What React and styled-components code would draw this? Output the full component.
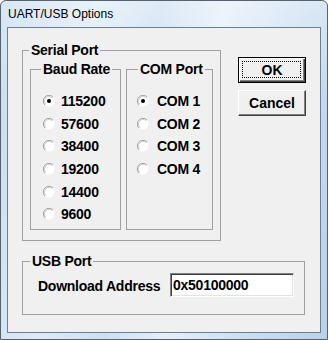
import styled, { createGlobalStyle } from "styled-components";

const GlobalStyle = createGlobalStyle`
  html, body {
    margin: 0;
    padding: 0;
    background: #ffffff;
  }
`;

const Window = styled.div`
  width: 328px;
  height: 340px;
  box-sizing: border-box;
  display: flex;
  flex-direction: column;
  padding: 0 6px 6px 6px;
  border: 1px solid #55626f;
  border-radius: 6px 6px 0 0;
  background:
    linear-gradient(180deg, rgba(255,255,255,0.35) 0%, rgba(255,255,255,0) 30%),
    linear-gradient(100deg, #c6dcf0 0%, #deebf7 25%, #cde0f2 42%, #e4eff9 58%, #cadef1 80%, #b8d1ea 100%);
`;

const TitleBar = styled.div`
  height: 26px;
  flex: none;
  display: flex;
  align-items: center;
  padding-left: 1px;
  font-family: "Liberation Sans", Arial, sans-serif;
  font-size: 12px;
  color: #000;
`;

const Client = styled.div`
  flex: 1;
  border: 1px solid #6a7f93;
  background: #f0f0f0;
  padding: 15px 0 0 14px;
  font-family: "Liberation Sans", Arial, sans-serif;
  font-size: 14px;
  font-weight: bold;
  letter-spacing: -0.25px;
  color: #000;
`;

const TopRow = styled.div`
  display: flex;
  align-items: flex-start;
`;

const Group = styled.fieldset`
  box-sizing: border-box;
  margin: ${(p) => p.$mt || 0}px 0 0 0;
  width: ${(p) => p.$w}px;
  height: ${(p) => p.$h}px;
  border: 1px solid #a0a0a0;
  padding: 0;
  min-inline-size: 0;
`;

const Caption = styled.legend`
  margin-left: ${(p) => p.$offset}px;
  padding: 0 2px;
  line-height: 14px;
  height: 14px;
  white-space: nowrap;
`;

const GroupBody = styled.div`
  padding: ${(p) => p.$pad};
`;

const GroupRow = styled.div`
  display: flex;
  gap: 5px;
`;

const OptionRow = styled.label`
  display: flex;
  align-items: center;
  height: 22.6px;
  gap: ${(p) => p.$gap}px;
`;

const ButtonColumn = styled.div`
  display: flex;
  flex-direction: column;
  gap: 7px;
  margin: 14px 0 0 17px;
`;

const DialogButton = styled.button`
  position: relative;
  width: 68px;
  height: 26px;
  box-sizing: border-box;
  background: #f0f0f0;
  font-family: "Liberation Sans", Arial, sans-serif;
  font-size: 14px;
  font-weight: bold;
  color: #000;
  padding: 0;
  border: 1px solid;
  border-color: ${(p) => (p.$primary ? "#000" : "#fff #404040 #404040 #fff")};
  box-shadow: ${(p) =>
    p.$primary
      ? "inset 1px 1px #fff, inset -1px -1px #404040, inset -2px -2px #808080"
      : "inset -1px -1px #808080"};

  &::after {
    content: "";
    display: ${(p) => (p.$primary ? "block" : "none")};
    position: absolute;
    inset: 3px 4px 4px 3px;
    border: 1px dotted #000;
  }
`;

const UsbRow = styled.div`
  display: flex;
  align-items: center;
`;

const FieldLabel = styled.span`
  width: 132px;
  padding-top: 2px;
`;

const AddressInput = styled.input`
  box-sizing: border-box;
  width: 124px;
  height: 24px;
  margin: 0;
  padding: 0 0 0 2px;
  border: 1px solid;
  border-color: #808080 #fff #fff #808080;
  box-shadow: inset 1px 1px #404040, inset -1px -1px #e3e3e3;
  background: #fff;
  font-family: "Liberation Sans", Arial, sans-serif;
  font-size: 14px;
  font-weight: bold;
  letter-spacing: -0.25px;
  color: #000;
  outline: none;
`;

function Radio({ checked }) {
  return (
    <svg width="12" height="12" viewBox="0 0 12 12" style={{ flex: "none" }}>
      <circle cx="6" cy="6" r="5.5" fill="#fff" />
      <path d="M10 2 A5.5 5.5 0 0 0 2 10" fill="none" stroke="#a0a0a0" strokeWidth="1" />
      <path d="M9.2 2.8 A4.5 4.5 0 0 0 2.8 9.2" fill="none" stroke="#d0d0d0" strokeWidth="1" />
      {checked && <circle cx="6" cy="6" r="2" fill="#000" />}
    </svg>
  );
}

const baudRates = ["115200", "57600", "38400", "19200", "14400", "9600"];
const comPorts = ["COM 1", "COM 2", "COM 3", "COM 4"];

export default function App() {
  return (
    <>
      <GlobalStyle />
      <Window>
        <TitleBar>UART/USB Options</TitleBar>
        <Client>
          <TopRow>
            <Group $w={199} $h={198}>
              <Caption $offset={6}>Serial Port</Caption>
              <GroupBody $pad="5px 7px 0 7px">
                <GroupRow>
                  <Group $w={91} $h={168}>
                    <Caption $offset={10}>Baud Rate</Caption>
                    <GroupBody $pad="14px 0 0 12px">
                      {baudRates.map((rate, i) => (
                        <OptionRow key={rate} $gap={6}>
                          <Radio checked={i === 0} />
                          {rate}
                        </OptionRow>
                      ))}
                    </GroupBody>
                  </Group>
                  <Group $w={87} $h={168}>
                    <Caption $offset={11}>COM Port</Caption>
                    <GroupBody $pad="14px 0 0 10px">
                      {comPorts.map((port, i) => (
                        <OptionRow key={port} $gap={8}>
                          <Radio checked={i === 0} />
                          {port}
                        </OptionRow>
                      ))}
                    </GroupBody>
                  </Group>
                </GroupRow>
              </GroupBody>
            </Group>
            <ButtonColumn>
              <DialogButton $primary>OK</DialogButton>
              <DialogButton>Cancel</DialogButton>
            </ButtonColumn>
          </TopRow>
          <Group $w={283} $h={61} $mt={13}>
            <Caption $offset={7}>USB Port</Caption>
            <GroupBody $pad="5px 0 0 15px">
              <UsbRow>
                <FieldLabel>Download Address</FieldLabel>
                <AddressInput defaultValue="0x50100000" />
              </UsbRow>
            </GroupBody>
          </Group>
        </Client>
      </Window>
    </>
  );
}
